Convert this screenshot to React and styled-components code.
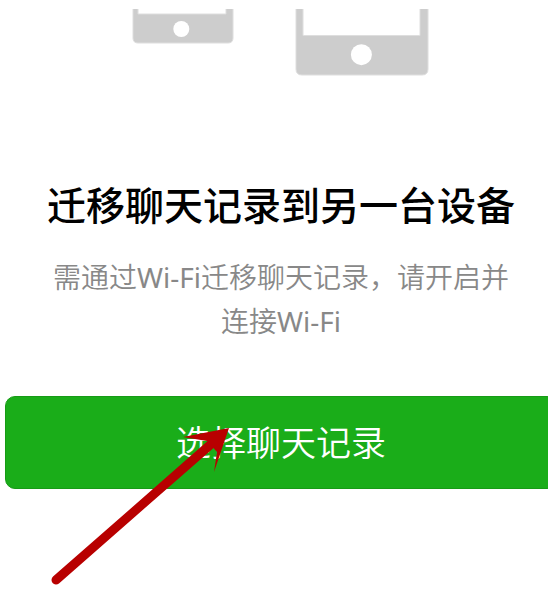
import React from "react";
import styled, { createGlobalStyle } from "styled-components";

export default function App() {
  return (
    <>
      <GlobalStyle />
      <Screen>
        <Content>
          <Devices />
          <Title>迁移聊天记录到另一台设备</Title>
          <Description>
            需通过<Latin>Wi-Fi</Latin>迁移聊天记录，请开启并连接<Latin>Wi-Fi</Latin>
          </Description>
          <SelectButton type="button">选择聊天记录</SelectButton>
        </Content>
        <Pointer />
      </Screen>
    </>
  );
}

function Devices() {
  return (
    <DevicesArt width="298" height="67" viewBox="0 0 298 67" aria-hidden="true">
      <g fill="#cdcdcd" stroke="#dedede" strokeWidth="1">
        <path d="M1 -5V29Q1 34 6 34H96Q101 34 101 29V-5Z" />
        <path d="M164 -5V60Q164 66 170 66H290Q296 66 296 60V-5Z" />
      </g>
      <g fill="#fff" stroke="#dedede" strokeWidth="1">
        <path d="M6 -5V5H94V-5Z" />
        <path d="M171 -5V26.5H288V-5Z" />
      </g>
      <circle cx="49.3" cy="20" r="8" fill="#fff" />
      <circle cx="229.4" cy="45.7" r="10.5" fill="#fff" />
    </DevicesArt>
  );
}

function Pointer() {
  return (
    <PointerArt width="190" height="170" viewBox="0 0 190 170" aria-hidden="true">
      <path
        d="M11 155L165 20"
        stroke="#b80000"
        strokeWidth="9"
        strokeLinecap="round"
      />
      <path d="M184 3L138 12L162 16L172 27L169 47Z" fill="#b80000" />
    </PointerArt>
  );
}

const GlobalStyle = createGlobalStyle`
  * {
    box-sizing: border-box;
  }
  body {
    margin: 0;
    background: #fff;
    font-family: "Noto Sans CJK SC", sans-serif;
  }
`;

const Screen = styled.main`
  position: relative;
  min-height: 100vh;
  margin-right: 11px;
  padding-top: 9px;
  overflow: hidden;
`;

/* runs a little past the right edge of the screen, which clips it */
const Content = styled.div`
  display: flex;
  flex-direction: column;
  align-items: center;
  margin-right: -9px;
  padding-left: 5px;
`;

const DevicesArt = styled.svg`
  display: block;
  flex: none;
`;

const Title = styled.h1`
  margin: 97px 0 0;
  color: #000;
  font-size: 39px;
  font-weight: 500;
  line-height: 60px;
  text-align: center;
`;

const Description = styled.p`
  margin: 21px 0 0;
  padding: 0 40px;
  color: #888;
  font-size: 28px;
  font-weight: 350;
  line-height: 44px;
  text-align: center;
`;

const Latin = styled.span`
  font-family: "Noto Sans", sans-serif;
  font-weight: 400;
  line-height: 1;
`;

const SelectButton = styled.button`
  width: 100%;
  height: 93px;
  margin-top: 54px;
  padding: 0 0 4px;
  border: 1px solid #179b16;
  border-radius: 10px;
  background: #1aad19;
  color: #fff;
  font-family: inherit;
  font-size: 35px;
  font-weight: 350;
  line-height: 52px;
  cursor: pointer;
`;

const PointerArt = styled.svg`
  position: absolute;
  top: 425px;
  left: 45px;
  fill: none;
  pointer-events: none;
`;
